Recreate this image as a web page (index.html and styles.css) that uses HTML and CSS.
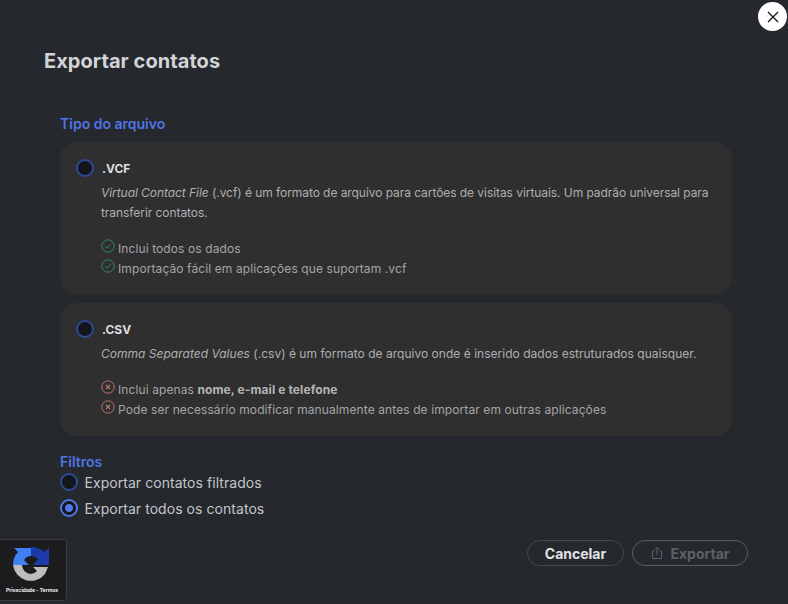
FILE: index.html
```html
<!DOCTYPE html>
<html lang="pt-BR">
<head>
<meta charset="utf-8">
<title>Exportar contatos</title>
<link rel="stylesheet" href="styles.css">
</head>
<body>
<main class="modal">
  <button class="close" aria-label="Fechar">
    <svg width="12" height="12" viewBox="0 0 12 12"><path d="M1 1l10 10M11 1L1 11" stroke="#1b1d21" stroke-width="1.4" fill="none"/></svg>
  </button>
  <h1 class="title">Exportar contatos</h1>
  <section class="content">
    <h2 class="label label-type">Tipo do arquivo</h2>
    <div class="card card-vcf">
      <div class="card-head"><span class="radio"></span><strong>.VCF</strong></div>
      <p class="desc desc-vcf"><em>Virtual Contact File</em> (.vcf) é um formato de arquivo para cartões de visitas virtuais. Um padrão universal para transferir contatos.</p>
      <ul class="list">
        <li><svg class="ic" viewBox="0 0 14 14"><circle cx="7" cy="7" r="6.200" stroke="#2b8a63" fill="none" stroke-width="1"/><path d="M4.200 7.200l2 2 3.600-4" stroke="#2b8a63" fill="none" stroke-width="1"/></svg>Inclui todos os dados</li>
        <li><svg class="ic" viewBox="0 0 14 14"><circle cx="7" cy="7" r="6.200" stroke="#2b8a63" fill="none" stroke-width="1"/><path d="M4.200 7.200l2 2 3.600-4" stroke="#2b8a63" fill="none" stroke-width="1"/></svg>Importação fácil em aplicações que suportam .vcf</li>
      </ul>
    </div>
    <div class="card card-csv">
      <div class="card-head"><span class="radio"></span><strong>.CSV</strong></div>
      <p class="desc"><em>Comma Separated Values</em> (.csv) é um formato de arquivo onde é inserido dados estruturados quaisquer.</p>
      <ul class="list">
        <li><svg class="ic" viewBox="0 0 14 14"><circle cx="7" cy="7" r="6.200" stroke="#b9746b" fill="none" stroke-width="1"/><path d="M5 5l4 4M9 5l-4 4" stroke="#b9746b" fill="none" stroke-width="1.200"/></svg>Inclui apenas&nbsp;<b>nome, e-mail e telefone</b></li>
        <li><svg class="ic" viewBox="0 0 14 14"><circle cx="7" cy="7" r="6.200" stroke="#b9746b" fill="none" stroke-width="1"/><path d="M5 5l4 4M9 5l-4 4" stroke="#b9746b" fill="none" stroke-width="1.200"/></svg>Pode ser necessário modificar manualmente antes de importar em outras aplicações</li>
      </ul>
    </div>
    <h2 class="label label-filter">Filtros</h2>
    <div class="option"><span class="radio"></span>Exportar contatos filtrados</div>
    <div class="option"><span class="radio radio-on"></span>Exportar todos os contatos</div>
  </section>
  <div class="actions">
    <button class="btn btn-cancel">Cancelar</button>
    <button class="btn btn-export">
      <svg width="14" height="14" viewBox="0 0 14 14"><path d="M4.500 5H2.500v7.500h9V5H9.500M7 9V1.500M4.800 3.500L7 1.300l2.200 2.200" stroke="#5e6166" fill="none" stroke-width="1"/></svg>
      Exportar
    </button>
  </div>
</main>
<div class="recaptcha">
  <svg class="recaptcha-logo" width="38" height="38" viewBox="0 0 38 38">
    <path d="M1 19 A18 18 0 0 1 6 6 L2 2 H19 V10 A9 9 0 0 0 12 14 L17 19 Z" fill="#3f80f5"/>
    <path d="M19 1 A18 18 0 0 1 32 6 L37 2 V19 H21 L26 13 A9 9 0 0 0 19 10 Z" fill="#1c3aa9"/>
    <path d="M1 19 H10 A9 9 0 0 0 19 28 A9 9 0 0 0 25 25 L21 21 H36 L33 28 A18 18 0 0 1 1 19 Z" fill="#bdbdbd"/>
  </svg>
  <span class="recaptcha-text">Privacidade - Termos</span>
</div>
</body>
</html>
```
FILE: styles.css
```css
* { box-sizing: border-box; }
html, body { margin: 0; height: 100%; }
body {
  background: #25282d;
  color: #c9cbcd;
  font-family: Inter, "Noto Sans", sans-serif;
  overflow: hidden;
}
.modal {
  position: relative;
  width: 788px;
  height: 604px;
  padding: 48px 40px 0 44px;
}
.close {
  position: absolute;
  top: 2px;
  right: 1px;
  width: 29px;
  height: 29px;
  border: 0;
  border-radius: 50%;
  background: #fff;
  padding: 0;
  display: flex;
  align-items: center;
  justify-content: center;
}
.title {
  margin: 0;
  font-size: 20px;
  line-height: 27px;
  font-weight: 700;
  color: #d2d4d7;
  letter-spacing: 0.06px;
}
.content {
  margin: 0 16px;
  width: 672px;
  padding-top: 39px;
}
.label {
  margin: 0;
  font-size: 14px;
  line-height: 20px;
  font-weight: 600;
  color: #4f74e3;
}
.label-type { margin-bottom: 8px; }
.label-filter { margin-top: 19px; line-height: 14px; }
.card {
  background: #2f2f2f;
  border-radius: 16px;
  padding: 16px 16px 0;
  margin-bottom: 9px;
}
.card-vcf { height: 152px; }
.card-csv { height: 133px; margin-bottom: 0; }
.card-head {
  display: flex;
  align-items: center;
  gap: 8px;
  height: 20px;
  font-size: 12px;
  color: #dcdddf;
}
.card-head strong { font-weight: 700; }
.radio {
  width: 18px;
  height: 18px;
  flex: none;
  border-radius: 50%;
  background: #14161c;
  border: 2px solid #2c4a96;
}
.radio-on {
  background: radial-gradient(circle, #5177e8 0 3.500px, #14161c 4.500px);
  border-color: #5177e8;
}
.desc {
  margin: 5px 0 0 25px;
  font-size: 12px;
  line-height: 20px;
  color: #adafb1;
  letter-spacing: 0.02px;
}
.desc-vcf { letter-spacing: -0.06px; }
.desc em { font-style: italic; }
.list {
  list-style: none;
  margin: 16px 0 0 25px;
  padding: 0;
  font-size: 12px;
  line-height: 20px;
  color: #a3a5a7;
  letter-spacing: 0.1px;
}
.list li { display: flex; align-items: center; height: 20px; }
.list b { font-weight: 700; color: #b3b5b7; }
.ic { width: 14px; height: 14px; margin: -6px 3px 0 0; flex: none; }
.option {
  display: flex;
  align-items: center;
  gap: 6.500px;
  height: 26px;
  font-size: 14px;
  color: #c4c6c9;
  letter-spacing: 0.05px;
}
.actions {
  display: flex;
  justify-content: flex-end;
  gap: 8px;
  margin-top: 19px;
}
.btn {
  display: flex;
  align-items: center;
  justify-content: center;
  gap: 6px;
  height: 26px;
  border-radius: 13px;
  background: transparent;
  font-family: inherit;
  font-size: 14px;
  font-weight: 700;
  padding: 0;
}
.btn-cancel { width: 97px; border: 1.500px solid #44474c; color: #e2e3e5; }
.btn-export { width: 116px; border: 1.500px solid #5a5c61; color: #5e6166; }
.recaptcha {
  position: absolute;
  left: 0;
  top: 539px;
  width: 67px;
  height: 62px;
  background: #1c1c1e;
  border: 1px solid #3a3b3e;
  border-left: 0;
  border-radius: 0 3px 3px 0;
  display: flex;
  flex-direction: column;
  align-items: center;
  padding-top: 6px;
}
.recaptcha-logo { margin-left: -4px; }
.recaptcha-text {
  font-size: 5px;
  line-height: 7px;
  font-weight: 700;
  color: #eee;
  margin: 3px 0 0 -2px;
}
```
